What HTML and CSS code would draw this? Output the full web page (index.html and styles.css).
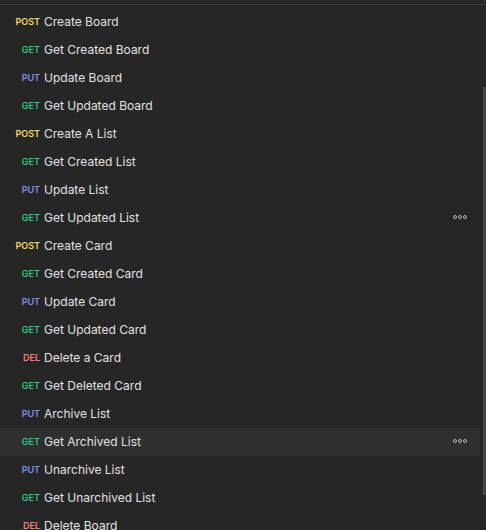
FILE: index.html
```html
<!DOCTYPE html>
<html>
<head>
<meta charset="utf-8">
<link rel="stylesheet" href="styles.css">
</head>
<body>
<div class="panel">
  <div class="topbox"></div>
  <ul class="list">
    <li class="row"><span class="m post">POST</span><span class="name">Create Board</span></li>
    <li class="row"><span class="m get">GET</span><span class="name">Get Created Board</span></li>
    <li class="row"><span class="m put">PUT</span><span class="name">Update Board</span></li>
    <li class="row"><span class="m get">GET</span><span class="name">Get Updated Board</span></li>
    <li class="row"><span class="m post">POST</span><span class="name">Create A List</span></li>
    <li class="row"><span class="m get">GET</span><span class="name">Get Created List</span></li>
    <li class="row"><span class="m put">PUT</span><span class="name">Update List</span></li>
    <li class="row"><span class="m get">GET</span><span class="name">Get Updated List</span><span class="more"><i></i><i></i><i></i></span></li>
    <li class="row"><span class="m post">POST</span><span class="name">Create Card</span></li>
    <li class="row"><span class="m get">GET</span><span class="name">Get Created Card</span></li>
    <li class="row"><span class="m put">PUT</span><span class="name">Update Card</span></li>
    <li class="row"><span class="m get">GET</span><span class="name">Get Updated Card</span></li>
    <li class="row"><span class="m del">DEL</span><span class="name">Delete a Card</span></li>
    <li class="row"><span class="m get">GET</span><span class="name">Get Deleted Card</span></li>
    <li class="row"><span class="m put">PUT</span><span class="name">Archive List</span></li>
    <li class="row active"><span class="m get">GET</span><span class="name">Get Archived List</span><span class="more"><i></i><i></i><i></i></span></li>
    <li class="row"><span class="m put">PUT</span><span class="name">Unarchive List</span></li>
    <li class="row"><span class="m get">GET</span><span class="name">Get Unarchived List</span></li>
    <li class="row"><span class="m del">DEL</span><span class="name">Delete Board</span></li>
  </ul>
  <div class="scrollbar"></div>
</div>
</body>
</html>
```
FILE: styles.css
```css
html, body {
  margin: 0;
  padding: 0;
  background: #262626;
  overflow: hidden;
}
body {
  font-family: Inter, "Noto Sans", sans-serif;
  color: #e2e2e2;
}
.panel {
  position: relative;
  width: 486px;
  height: 530px;
  overflow: hidden;
}
.topbox {
  width: 484px;
  height: 4px;
  border-right: 1px solid #3a3a3a;
  border-bottom: 1px solid #3a3a3a;
}
.list {
  list-style: none;
  margin: 0;
  padding: 3px 0 0 0;
  width: 480px;
}
.row {
  display: flex;
  align-items: center;
  height: 28px;
  box-sizing: border-box;
  padding-bottom: 2px;
}
.row.active {
  background: #2f2f2f;
}
.m {
  width: 40px;
  text-align: right;
  font-size: 9px;
  font-weight: 600;
  flex: none;
  padding-top: 1px;
}
.post { color: #efdd63; }
.get { color: #27c97c; }
.put { color: #7d91ee; }
.del { color: #f3806f; }
.name {
  margin-left: 4px;
  font-size: 12px;
  flex: 1;
}
.more {
  display: flex;
  gap: 1px;
  margin-right: 13px;
}
.more i {
  width: 2px;
  height: 2px;
  border: 1px solid #b4b4b4;
  border-radius: 50%;
}
.scrollbar {
  position: absolute;
  right: 0;
  top: 87px;
  width: 3px;
  height: 408px;
  background: #474747;
}
```
